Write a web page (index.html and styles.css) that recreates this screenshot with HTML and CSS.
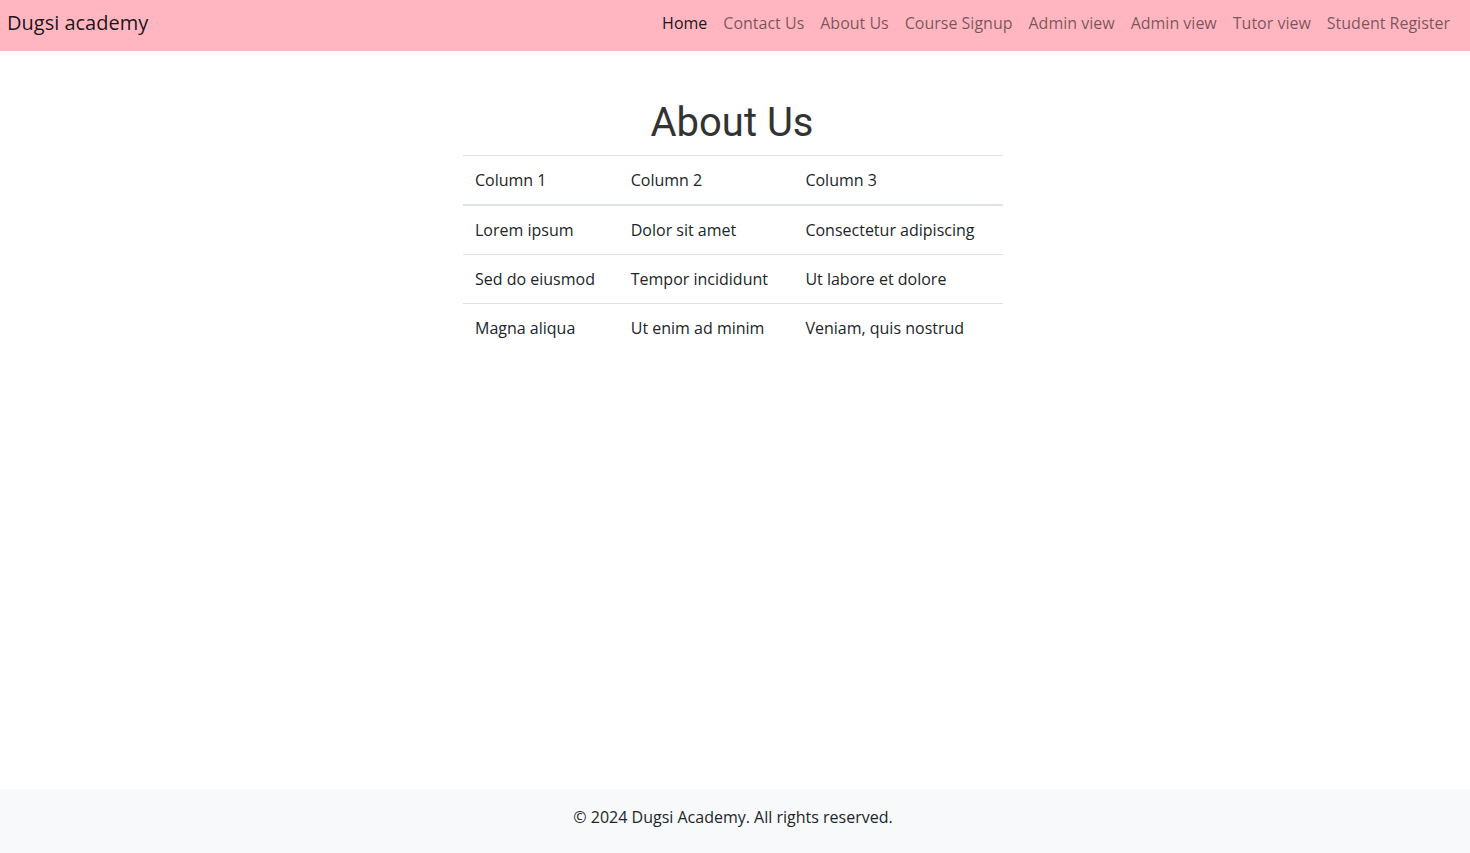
FILE: index.html
```html
<!DOCTYPE html>
<html lang="en">
<head>
<meta charset="utf-8">
<title>About Us - Dugsi academy</title>
<link rel="stylesheet" href="styles.css">
</head>
<body>
<div class="page">
  <nav class="navbar">
    <a class="brand" href="#">Dugsi academy</a>
    <ul class="nav-links">
      <li><a class="active" href="#">Home</a></li>
      <li><a href="#">Contact Us</a></li>
      <li><a href="#">About Us</a></li>
      <li><a href="#">Course Signup</a></li>
      <li><a href="#">Admin view</a></li>
      <li><a href="#">Admin view</a></li>
      <li><a href="#">Tutor view</a></li>
      <li><a href="#">Student Register</a></li>
    </ul>
  </nav>
  <main class="content">
    <h1 class="title">About Us</h1>
    <table class="info-table">
      <thead>
        <tr><th>Column 1</th><th>Column 2</th><th>Column 3</th></tr>
      </thead>
      <tbody>
        <tr><td>Lorem ipsum</td><td>Dolor sit amet</td><td>Consectetur adipiscing</td></tr>
        <tr><td>Sed do eiusmod</td><td>Tempor incididunt</td><td>Ut labore et dolore</td></tr>
        <tr><td>Magna aliqua</td><td>Ut enim ad minim</td><td>Veniam, quis nostrud</td></tr>
      </tbody>
    </table>
  </main>
  <footer class="footer">© 2024 Dugsi Academy. All rights reserved.</footer>
</div>
</body>
</html>
```
FILE: styles.css
```css
* { box-sizing: border-box; }
html, body { margin: 0; padding: 0; }
body {
  font-family: "Open Sans", "Liberation Sans", sans-serif;
  font-size: 16px;
  line-height: 1.5;
  color: #212529;
  background: #fff;
}
.page {
  min-height: 853px;
  display: flex;
  flex-direction: column;
}
.navbar {
  height: 51px;
  background: #ffb6c1;
  display: flex;
  align-items: center;
  justify-content: space-between;
  padding: 0 12px 6px 7px;
}
.brand {
  font-size: 20px;
  color: rgba(0,0,0,0.9);
  text-decoration: none;
  line-height: 30px;
}
.nav-links {
  list-style: none;
  margin: 0;
  padding: 0;
  display: flex;
}
.nav-links a {
  display: block;
  padding: 8px 8px;
  color: rgba(0,0,0,0.55);
  text-decoration: none;
  font-size: 16px;
}
.nav-links a.active { color: rgba(0,0,0,0.9); }
.content {
  flex: 1;
  display: flex;
  flex-direction: column;
  align-items: center;
  padding-top: 48px;
  padding-right: 4px;
}
.title {
  font-family: Roboto, "Liberation Sans", sans-serif;
  font-weight: 400;
  font-size: 40px;
  line-height: 48px;
  color: #333;
  margin: 0 2px 8px 0;
}
.info-table {
  width: 540px;
  border-collapse: collapse;
  text-align: left;
}
.info-table th, .info-table td {
  font-weight: 400;
  padding: 12px 10px 12px 12px;
  border-top: 1px solid #dee2e6;
  line-height: 24px;
  color: #212529;
}
.info-table thead th { border-bottom: 2px solid #dee2e6; }
.info-table tbody tr:first-child td { border-top: 0; }
.info-table tbody tr:last-child td { border-bottom: 0; }
.footer {
  background: #f8f9fa;
  height: 64px;
  display: flex;
  align-items: center;
  justify-content: center;
  padding: 0 4px 8px 0;
}
```
